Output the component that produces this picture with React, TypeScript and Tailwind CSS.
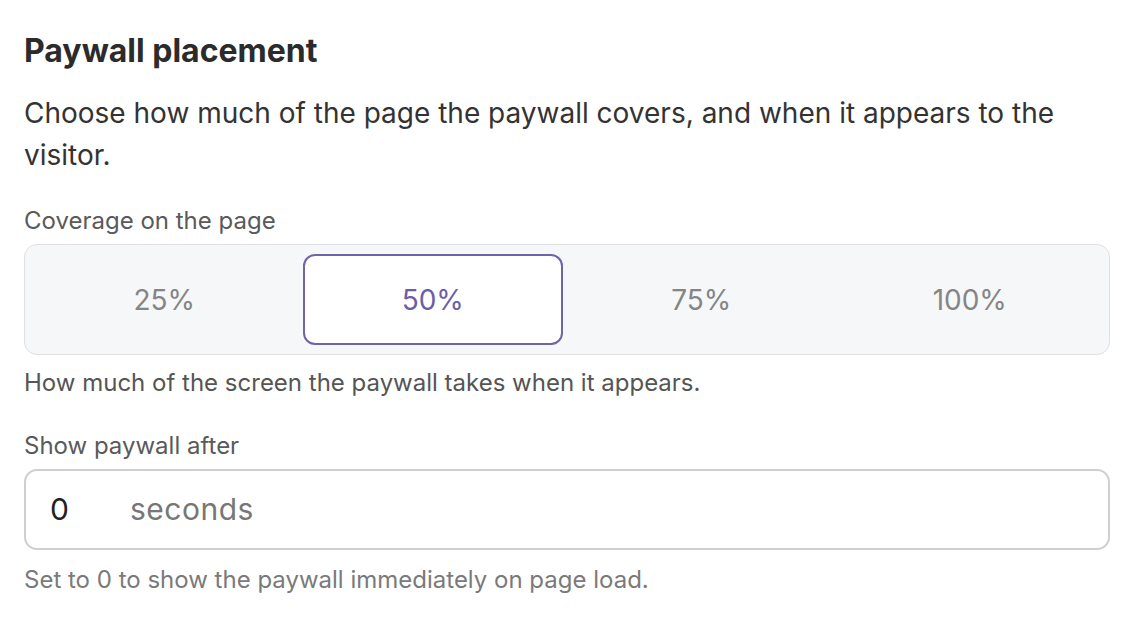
import React, { useState } from "react";

const options = ["25%", "50%", "75%", "100%"];

export default function App() {
  const [coverage, setCoverage] = useState("50%");
  const [delay, setDelay] = useState("0");

  return (
    <div
      className="min-h-screen bg-white px-6 pt-[31px] text-[#2f2f2f]"
      style={{ fontFamily: "Inter, 'Noto Sans', sans-serif" }}
    >
      <h2 className="text-[32px] leading-[40px] font-bold text-[#2b2b2b]">
        Paywall placement
      </h2>
      <p className="mt-[21px] text-[28px] leading-[42px] text-[#333333]">
        Choose how much of the page the paywall covers, and when it appears to
        the visitor.
      </p>

      <div className="mt-[29px] text-[24px] leading-[32px] text-[#5a5a5a]">
        Coverage on the page
      </div>
      <div className="mt-[7px] grid grid-cols-4 gap-2 rounded-[13px] border border-[#e0e0e2] bg-[#f6f7f9] p-[9px]">
        {options.map((opt) => {
          const active = opt === coverage;
          return (
            <button
              key={opt}
              type="button"
              onClick={() => setCoverage(opt)}
              className={
                active
                  ? "h-[91px] rounded-xl border-2 border-[#6f63a9] bg-white text-[28px] text-[#6a5ea8]"
                  : "h-[91px] rounded-xl border-2 border-transparent text-[28px] text-[#858585]"
              }
            >
              {opt}
            </button>
          );
        })}
      </div>
      <p className="mt-[12px] text-[24px] leading-[32px] text-[#555555]">
        How much of the screen the paywall takes when it appears.
      </p>

      <div className="mt-[31px] text-[24px] leading-[32px] text-[#5a5a5a]">
        Show paywall after
      </div>
      <label className="mt-[7px] flex h-[81px] items-center rounded-[13px] border-2 border-[#cfcfcf] bg-white pl-[24px]">
        <input
          value={delay}
          onChange={(e) => setDelay(e.target.value)}
          className="w-[80px] bg-transparent text-[30px] text-[#222222] outline-none"
        />
        <span className="text-[30px] tracking-[0.5px] text-[#777777]">
          seconds
        </span>
      </label>
      <p className="mt-[14px] text-[24px] leading-[32px] text-[#7a7a7a]">
        Set to 0 to show the paywall immediately on page load.
      </p>
    </div>
  );
}
